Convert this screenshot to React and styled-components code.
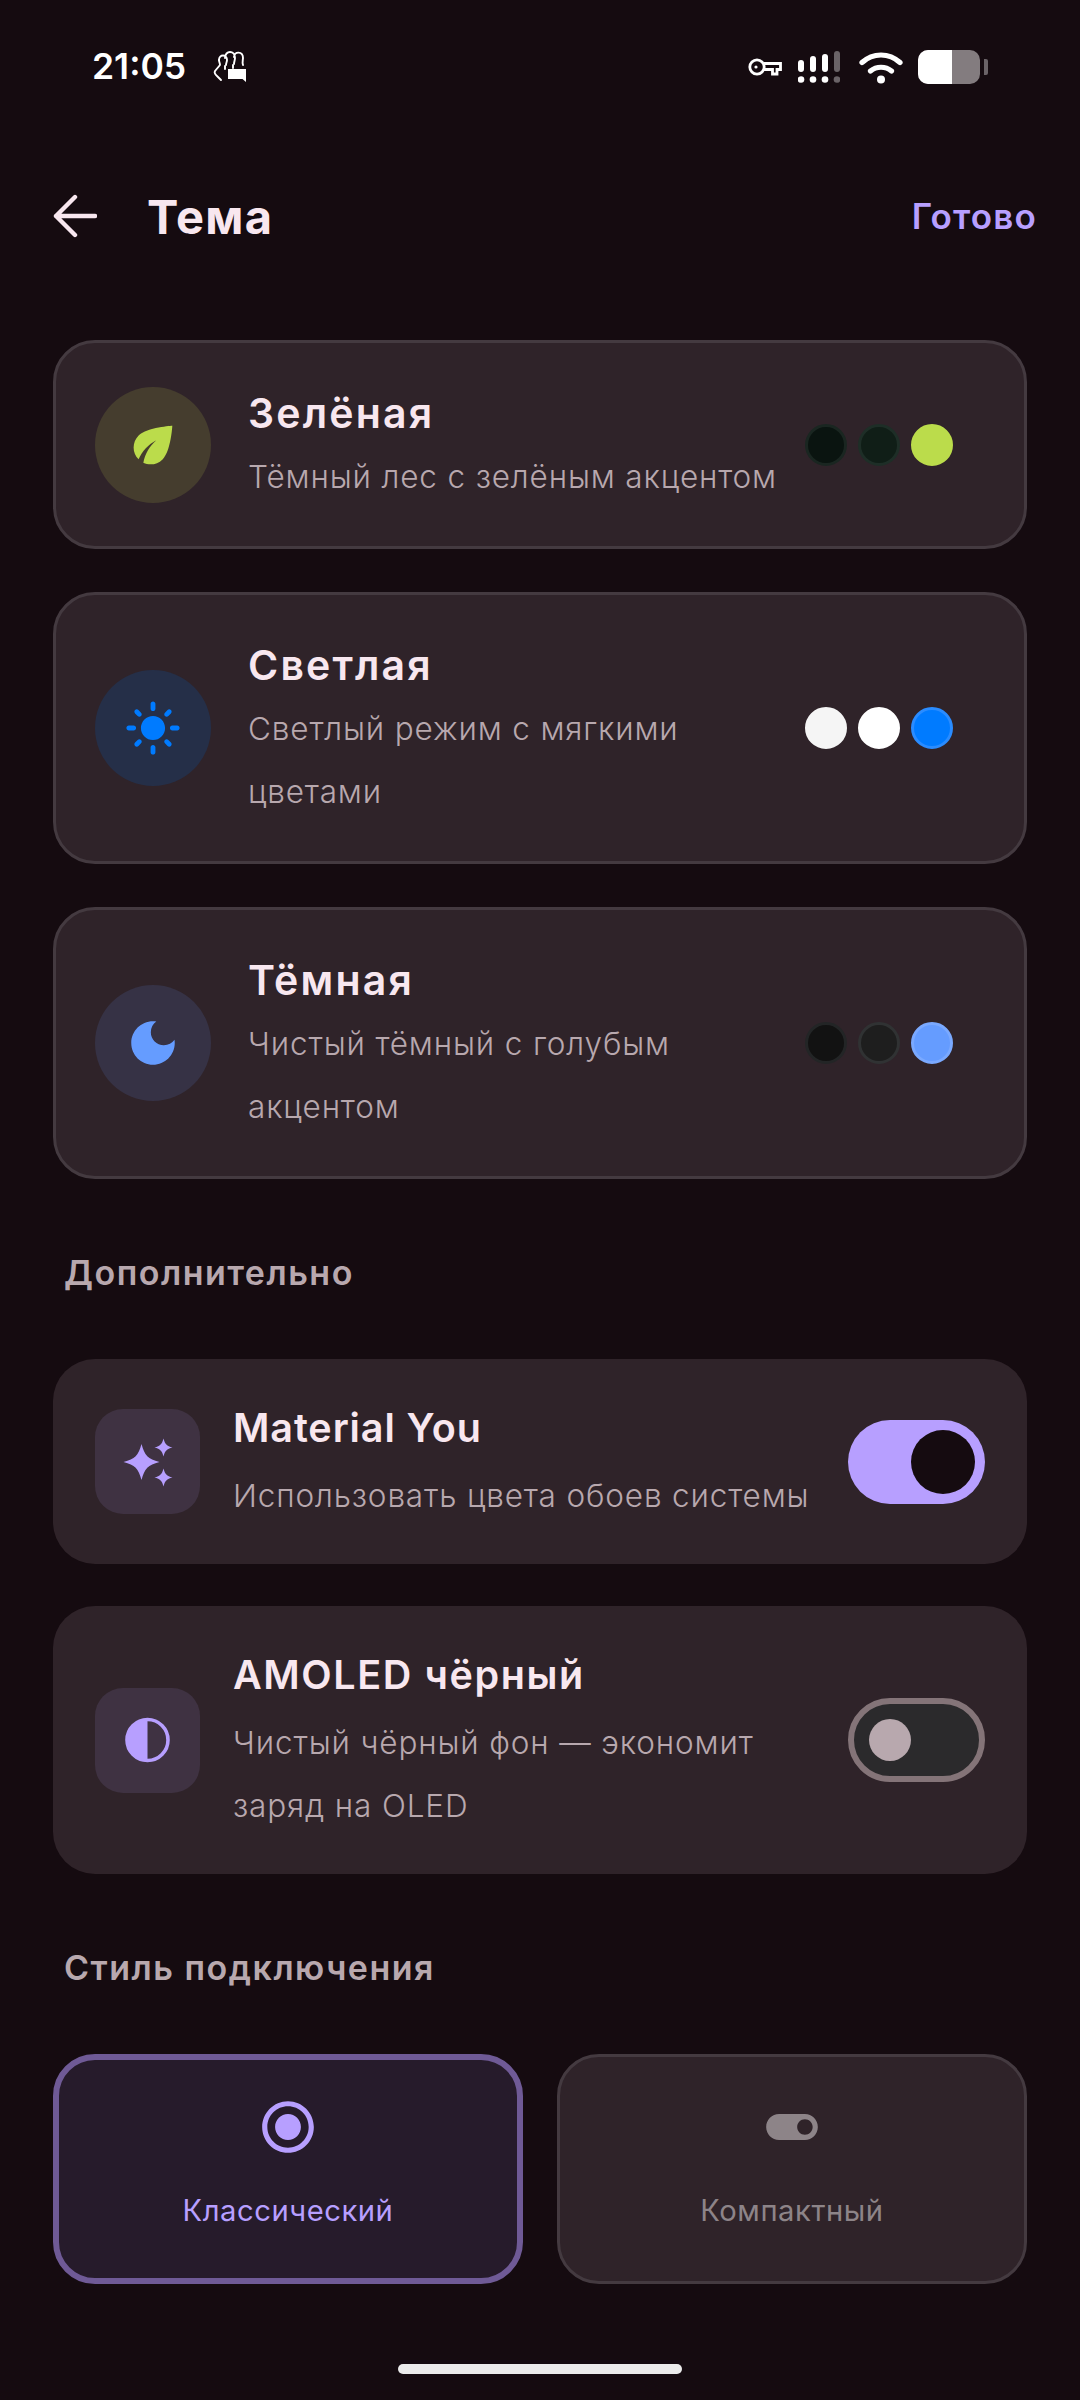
import React from "react";
import styled, { createGlobalStyle } from "styled-components";

const Global = createGlobalStyle`
  html, body { margin: 0; padding: 0; background: #150b10; }
  * { box-sizing: border-box; }
  #root { width: 1080px; height: 2400px; overflow: hidden; }
`;

const Screen = styled.div`
  position: relative;
  width: 1080px;
  height: 2400px;
  background: #150b10;
  font-family: Inter, "Noto Sans", sans-serif;
  color: #f8e7ef;
`;

const StatusBar = styled.div`
  height: 174px;
  padding: 47px 92px 0 92px;
  display: flex;
  justify-content: space-between;
  align-items: flex-start;
`;
const StatusLeft = styled.div`
  display: flex;
  align-items: center;
  gap: 27px;
  height: 40px;
`;
const Time = styled.span`
  font-size: 35.5px;
  line-height: 40px;
  font-weight: 600;
  color: #fff;
`;
const StatusRight = styled.div`
  display: flex;
  align-items: center;
  height: 40px;
`;

const Header = styled.div`
  height: 84px;
  padding: 0 43px 0 53px;
  display: flex;
  align-items: center;
  margin-bottom: 82px;
`;
const ScreenTitle = styled.h1`
  margin: 0 0 0 50px;
  flex: 1;
  font-size: 47px;
  font-weight: 700;
  letter-spacing: 1.3px;
  color: #f8e7ef;
`;
const Done = styled.span`
  font-size: 35px;
  font-weight: 600;
  letter-spacing: 1.2px;
  color: #b79fff;
`;

const Content = styled.div`
  padding: 0 53px;
`;
const Stack = styled.div`
  display: flex;
  flex-direction: column;
  gap: ${(p) => p.$gap}px;
`;

const ThemeCard = styled.div`
  display: flex;
  align-items: center;
  padding: 38px 71px 38px 39px;
  background: #2f2329;
  border: 3px solid #443a40;
  border-radius: 42px;
`;
const RoundIcon = styled.div`
  width: 116px;
  height: 116px;
  flex: none;
  border-radius: 50%;
  background: ${(p) => p.$bg};
  display: flex;
  align-items: center;
  justify-content: center;
  margin-right: 37px;
`;
const CardText = styled.div`
  flex: 1;
  min-width: 0;
`;
const Title = styled.div`
  font-size: ${(p) => p.$size || 39.5}px;
  line-height: 64px;
  font-weight: 600;
  letter-spacing: ${(p) => p.$ls ?? 1.5}px;
  color: #f8e7ef;
  margin-bottom: ${(p) => p.$mb || 0}px;
`;
const Desc = styled.div`
  font-size: 31.5px;
  line-height: 63px;
  font-weight: 300;
  letter-spacing: 0.85px;
  color: #b8a8ae;
`;
const Dots = styled.div`
  display: flex;
  gap: 11px;
  flex: none;
  margin-left: 18px;
`;
const Dot = styled.div`
  width: 42px;
  height: 42px;
  border-radius: 50%;
  background: ${(p) => p.$bg};
  border: 3px solid ${(p) => p.$border};
`;

const SectionLabel = styled.div`
  height: 44px;
  line-height: 44px;
  margin: 72px 0 64px 11px;
  font-size: 34px;
  font-weight: 600;
  letter-spacing: 1.5px;
  color: #b8a8ae;
`;

const SwitchCard = styled.div`
  display: flex;
  align-items: center;
  padding: 37px 42px;
  background: #2f2329;
  border-radius: 42px;
`;
const SquareIcon = styled.div`
  width: 105px;
  height: 105px;
  flex: none;
  border-radius: 28px;
  background: #3f3242;
  display: flex;
  align-items: center;
  justify-content: center;
  margin-right: 33px;
`;
const Toggle = styled.div`
  width: 137px;
  height: 84px;
  flex: none;
  margin-left: 12px;
  border-radius: 42px;
  display: flex;
  align-items: center;
  background: ${(p) => (p.$on ? "#b79fff" : "#2b2a2c")};
  border: ${(p) => (p.$on ? "none" : "6px solid #847478")};
  justify-content: ${(p) => (p.$on ? "flex-end" : "flex-start")};
  padding: ${(p) => (p.$on ? "0 10px" : "0 15px")};
`;
const Thumb = styled.div`
  width: ${(p) => p.$size}px;
  height: ${(p) => p.$size}px;
  border-radius: 50%;
  background: ${(p) => p.$bg};
`;

const Tiles = styled.div`
  display: grid;
  grid-template-columns: 1fr 1fr;
  gap: 34px;
`;
const Tile = styled.div`
  height: 230px;
  display: flex;
  flex-direction: column;
  align-items: center;
  padding-top: ${(p) => (p.$active ? 36 : 39)}px;
  background: ${(p) => (p.$active ? "#261b2b" : "#2f2329")};
  border: ${(p) => (p.$active ? "6px solid #6f5a96" : "3px solid #443a40")};
  border-radius: 42px;
`;
const TileLabel = styled.div`
  margin-top: 31px;
  font-size: 29.2px;
  line-height: 44px;
  letter-spacing: 0.55px;
  color: ${(p) => (p.$active ? "#b79fff" : "#8d8488")};
`;

const HomeBar = styled.div`
  position: absolute;
  left: 398px;
  top: 2364px;
  width: 284px;
  height: 10px;
  border-radius: 5px;
  background: #ebebeb;
`;

const M = ({ size, color, d }) => (
  <svg width={size} height={size} viewBox="0 0 24 24" fill={color}>
    <path d={d} />
  </svg>
);

const ECO = "M6.05 8.05c-2.73 2.73-2.73 7.15-.02 9.88 1.47-3.4 4.09-6.24 7.36-7.93-2.77 2.34-4.71 5.61-5.39 9.32 2.6 1.23 5.8.78 7.95-1.37C19.43 14.47 20 4 20 4S9.53 4.57 6.05 8.05z";
const SUN = "M12 7c-2.76 0-5 2.24-5 5s2.24 5 5 5 5-2.24 5-5-2.24-5-5-5zM2 13h2c.55 0 1-.45 1-1s-.45-1-1-1H2c-.55 0-1 .45-1 1s.45 1 1 1zm18 0h2c.55 0 1-.45 1-1s-.45-1-1-1h-2c-.55 0-1 .45-1 1s.45 1 1 1zM11 2v2c0 .55.45 1 1 1s1-.45 1-1V2c0-.55-.45-1-1-1s-1 .45-1 1zm0 18v2c0 .55.45 1 1 1s1-.45 1-1v-2c0-.55-.45-1-1-1s-1 .45-1 1zM5.99 4.58c-.39-.39-1.03-.39-1.41 0-.39.39-.39 1.03 0 1.41l1.06 1.06c.39.39 1.03.39 1.41 0s.39-1.03 0-1.41L5.99 4.58zm12.37 12.37c-.39-.39-1.03-.39-1.41 0-.39.39-.39 1.03 0 1.41l1.06 1.06c.39.39 1.03.39 1.41 0 .39-.39.39-1.03 0-1.41l-1.06-1.06zm1.06-10.96c.39-.39.39-1.03 0-1.41-.39-.39-1.03-.39-1.41 0l-1.06 1.06c-.39.39-.39 1.03 0 1.41s1.03.39 1.41 0l1.06-1.06zM7.05 18.36c.39-.39.39-1.03 0-1.41-.39-.39-1.03-.39-1.41 0l-1.06 1.06c-.39.39-.39 1.03 0 1.41s1.03.39 1.41 0l1.06-1.06z";
const MOON = "M12 3c-4.97 0-9 4.03-9 9s4.03 9 9 9 9-4.03 9-9c0-.46-.04-.92-.1-1.36-.98 1.37-2.58 2.26-4.4 2.26-2.98 0-5.4-2.42-5.4-5.4 0-1.81.89-3.42 2.26-4.4-.44-.06-.9-.1-1.36-.1z";
const RADIO = "M12 7c-2.76 0-5 2.24-5 5s2.24 5 5 5 5-2.24 5-5-2.24-5-5-5zm0-5C6.48 2 2 6.48 2 12s4.48 10 10 10 10-4.48 10-10S17.52 2 12 2zm0 18c-4.42 0-8-3.58-8-8s3.58-8 8-8 8 3.58 8 8-3.58 8-8 8z";
const TOGGLE = "M17 7H7c-2.76 0-5 2.24-5 5s2.24 5 5 5h10c2.76 0 5-2.24 5-5s-2.24-5-5-5zm0 8c-1.66 0-3-1.34-3-3s1.34-3 3-3 3 1.34 3 3-1.34 3-3 3z";

const star = (cx, cy, r) =>
  `M${cx} ${cy - r}C${cx + r * 0.18} ${cy - r * 0.35} ${cx + r * 0.35} ${cy - r * 0.18} ${cx + r} ${cy}C${cx + r * 0.35} ${cy + r * 0.18} ${cx + r * 0.18} ${cy + r * 0.35} ${cx} ${cy + r}C${cx - r * 0.18} ${cy + r * 0.35} ${cx - r * 0.35} ${cy + r * 0.18} ${cx - r} ${cy}C${cx - r * 0.35} ${cy - r * 0.18} ${cx - r * 0.18} ${cy - r * 0.35} ${cx} ${cy - r}Z`;

const Sparkles = () => (
  <svg width="58" height="58" viewBox="0 0 58 58" fill="#b79fff">
    <path d={star(22.5, 29, 18)} />
    <path d={star(44.5, 14.5, 9)} />
    <path d={star(44.5, 44.5, 9)} />
  </svg>
);
const Contrast = () => (
  <svg width="58" height="58" viewBox="0 0 58 58">
    <circle cx="28.5" cy="29" r="20.5" fill="none" stroke="#b79fff" strokeWidth="3.6" />
    <path d="M28.5 8.5a20.5 20.5 0 0 0 0 41z" fill="#b79fff" />
  </svg>
);
const Back = () => (
  <svg width="44" height="44" viewBox="0 0 44 44" fill="none" stroke="#f8e7ef" strokeWidth="4.4" strokeLinecap="round" strokeLinejoin="round">
    <path d="M42 22H3M22 3 3 22l19 19" />
  </svg>
);
const Hands = () => (
  <svg width="34" height="32" viewBox="0 0 34 32" fill="none" stroke="#fff" strokeWidth="1.9" strokeLinejoin="round" strokeLinecap="round">
    <path d="M6 9c0-6 8-6 8 0 0 2-1 3-1 5M12 7c0-8 10-8 10 0 0 2-1 4-1 6M21 6c0-6 9-6 9 1 0 2-1 4 0 7" />
    <path d="M6 9c0 2 1 3 1 5l-5 6c-1 2 0 3 3 6l3 3" />
    <path d="M12 18v-3M20 17v-3" />
    <path d="M15 18h18v13l-3.5-3H15z" fill="#fff" stroke="none" />
  </svg>
);
const Key = () => (
  <svg width="34" height="20" viewBox="0 0 34 20" fill="none" stroke="#fff" strokeWidth="2.8">
    <circle cx="9" cy="10" r="7.2" />
    <circle cx="8" cy="10" r="1.6" fill="#fff" stroke="none" />
    <path d="M16 6.5h16.5v6H29v4.5h-4.5v-4.5H16" strokeLinejoin="miter" />
  </svg>
);
const Signal = () => (
  <svg width="42" height="32" viewBox="0 0 42 32" fill="#fff">
    <rect x="0" y="9" width="6" height="12" rx="3" />
    <rect x="12" y="5" width="6" height="16" rx="3" />
    <rect x="24" y="3" width="6" height="18" rx="3" />
    <rect x="36" y="0" width="6" height="21" rx="3" fill="#6a6367" />
    <circle cx="3" cy="28.5" r="3.3" />
    <circle cx="15" cy="28.5" r="3.3" />
    <circle cx="27" cy="28.5" r="3.3" />
    <circle cx="39" cy="28.5" r="3.3" fill="#6a6367" />
  </svg>
);
const Wifi = () => (
  <svg width="44" height="33" viewBox="0 0 44 33" fill="none" stroke="#fff" strokeWidth="5.2" strokeLinecap="round">
    <path d="M3 11.5c11-10 27-10 38 0" />
    <path d="M11.5 20c6-5 15-5 21 0" />
    <circle cx="22" cy="28.5" r="4" fill="#fff" stroke="none" />
  </svg>
);
const Battery = () => (
  <svg width="70" height="34" viewBox="0 0 70 34">
    <rect x="0" y="0" width="62" height="34" rx="10" fill="#837c7f" />
    <path d="M10 0h24v34H10A10 10 0 0 1 0 24V10A10 10 0 0 1 10 0z" fill="#fff" />
    <path d="M66 9h2a2 2 0 0 1 2 2v12a2 2 0 0 1-2 2h-2z" fill="#6a6367" />
  </svg>
);

const Gap = styled.span`
  display: inline-block;
  width: ${(p) => p.$w}px;
`;

const themes = [
  { title: "Зелёная", desc: "Тёмный лес с зелёным акцентом", bg: "#453d2e", icon: <M size={58} color="#bbdc4b" d={ECO} />,
    dots: [["#0a1410", "#1a2621"], ["#101e17", "#1e2e27"], ["#bbdc4b", "#bbdc4b"]] },
  { title: "Светлая", desc: "Светлый режим с мягкими цветами", bg: "#252f48", icon: <M size={58} color="#007bff" d={SUN} />,
    dots: [["#f5f5f5", "#f5f5f5"], ["#ffffff", "#ffffff"], ["#007bff", "#2a8cff"]] },
  { title: "Тёмная", desc: "Чистый тёмный с голубым акцентом", bg: "#363245", icon: <M size={58} color="#659cff" d={MOON} />,
    dots: [["#121212", "#232526"], ["#1e1e1e", "#303233"], ["#659cff", "#7aa9ff"]] },
];

export default function App() {
  return (
    <Screen>
      <Global />
      <StatusBar>
        <StatusLeft>
          <Time>21:05</Time>
          <Hands />
        </StatusLeft>
        <StatusRight>
          <Key />
          <Gap $w={16} />
          <Signal />
          <Gap $w={19} />
          <Wifi />
          <Gap $w={15} />
          <Battery />
        </StatusRight>
      </StatusBar>
      <Header>
        <Back />
        <ScreenTitle>Тема</ScreenTitle>
        <Done>Готово</Done>
      </Header>
      <Content>
        <Stack $gap={43}>
          {themes.map((t) => (
            <ThemeCard key={t.title}>
              <RoundIcon $bg={t.bg}>{t.icon}</RoundIcon>
              <CardText>
                <Title $size={41} $ls={2.2}>{t.title}</Title>
                <Desc>{t.desc}</Desc>
              </CardText>
              <Dots>
                {t.dots.map(([bg, border]) => (
                  <Dot key={bg} $bg={bg} $border={border} />
                ))}
              </Dots>
            </ThemeCard>
          ))}
        </Stack>
        <SectionLabel>Дополнительно</SectionLabel>
        <Stack $gap={42}>
          <SwitchCard>
            <SquareIcon><Sparkles /></SquareIcon>
            <CardText>
              <Title $mb={4} $ls={0.9}>Material You</Title>
              <Desc>Использовать цвета обоев системы</Desc>
            </CardText>
            <Toggle $on><Thumb $size={64} $bg="#150b10" /></Toggle>
          </SwitchCard>
          <SwitchCard>
            <SquareIcon><Contrast /></SquareIcon>
            <CardText>
              <Title $mb={4} $ls={1.6}>AMOLED чёрный</Title>
              <Desc>Чистый чёрный фон — экономит заряд на OLED</Desc>
            </CardText>
            <Toggle><Thumb $size={42} $bg="#b8a8ae" /></Toggle>
          </SwitchCard>
        </Stack>
        <SectionLabel>Стиль подключения</SectionLabel>
        <Tiles>
          <Tile $active>
            <M size={62} color="#b79fff" d={RADIO} />
            <TileLabel $active>Классический</TileLabel>
          </Tile>
          <Tile>
            <M size={62} color="#8d8488" d={TOGGLE} />
            <TileLabel>Компактный</TileLabel>
          </Tile>
        </Tiles>
      </Content>
      <HomeBar />
    </Screen>
  );
}
